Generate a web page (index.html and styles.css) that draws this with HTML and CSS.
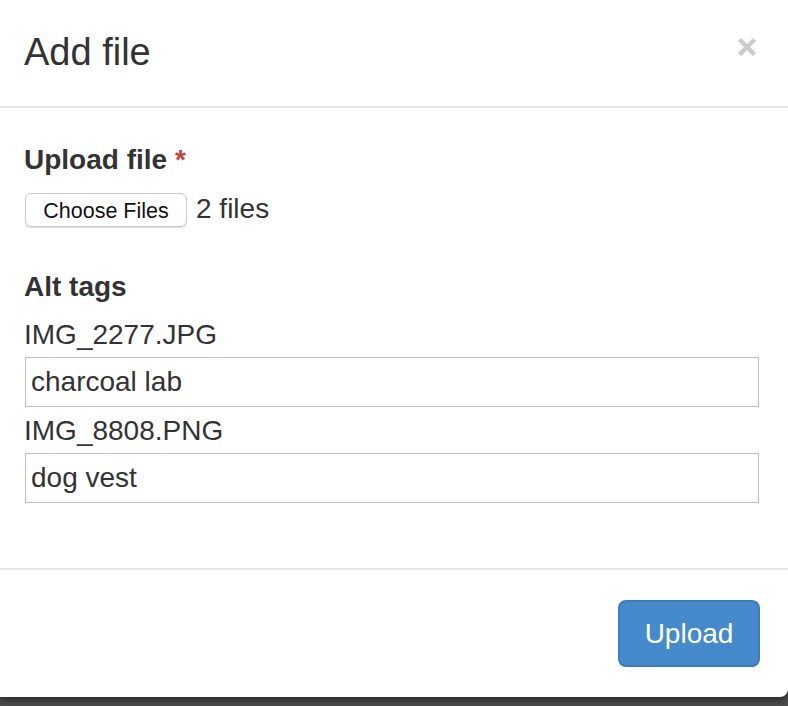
FILE: index.html
```html
<!DOCTYPE html>
<html lang="en">
<head>
<meta charset="utf-8">
<title>Add file</title>
<link rel="stylesheet" href="styles.css">
</head>
<body>
<div class="modal">
  <div class="modal-header">
    <h4 class="modal-title">Add file</h4>
    <button class="close" type="button" aria-label="Close">
      <svg width="20" height="20" viewBox="0 0 20 20"><path d="M2.5 2.5 L17.5 17.5 M17.5 2.5 L2.5 17.5" stroke="#cbcbcb" stroke-width="4.4" fill="none"/></svg>
    </button>
  </div>
  <div class="modal-body">
    <div class="group-upload">
      <div class="label">Upload file <span class="req">*</span></div>
      <div class="file-row">
        <span class="choose">Choose Files</span>
        <span class="file-count">2 files</span>
      </div>
    </div>
    <div class="group-alt">
      <div class="label label-alt">Alt tags</div>
      <div class="alt-item">
        <div class="file-name">IMG_2277.JPG</div>
        <input class="alt-input" type="text" value="charcoal lab">
      </div>
      <div class="alt-item">
        <div class="file-name">IMG_8808.PNG</div>
        <input class="alt-input" type="text" value="dog vest">
      </div>
    </div>
  </div>
  <div class="modal-footer">
    <button class="btn-primary" type="button">Upload</button>
  </div>
</div>
</body>
</html>
```
FILE: styles.css
```css
* { box-sizing: border-box; }
html, body { margin: 0; padding: 0; }
body {
  background: #4e4e4e;
  font-family: "Liberation Sans", Arial, sans-serif;
  color: #333;
  width: 788px;
  height: 706px;
  overflow: hidden;
}
.modal {
  width: 788px;
  height: 697px;
  background: #fff;
  border-bottom-right-radius: 8px;
  box-shadow: 0 3px 8px rgba(0,0,0,0.5);
  display: flex;
  flex-direction: column;
}
.modal-header {
  flex: none;
  height: 108px;
  padding: 26px 30px 28px 24px;
  border-bottom: 2px solid #e5e5e5;
  display: flex;
  justify-content: space-between;
  align-items: flex-start;
}
.modal-title {
  margin: 0;
  font-size: 38px;
  line-height: 52px;
  font-weight: normal;
  color: #333;
}
.close {
  border: 0;
  background: none;
  padding: 0;
  margin-top: 11px;
  margin-right: 1px;
  width: 20px;
  height: 20px;
  display: block;
}
.close svg { display: block; }
.modal-body {
  flex: none;
  padding: 32px 27px 0 24px;
  height: 462px;
  border-bottom: 2px solid #e5e5e5;
}
.label {
  font-size: 28px;
  line-height: 40px;
  font-weight: bold;
  color: #333;
}
.req { color: #c9433d; }
.file-row {
  margin-top: 10px;
  height: 40px;
  display: flex;
  align-items: baseline;
  padding-top: 3px;
}
.choose {
  display: inline-block;
  height: 34px;
  line-height: 34px;
  width: 162px;
  margin-left: 1px;
  text-align: center;
  font-size: 21.5px;
  color: #111;
  background: #fff;
  border: 1px solid #c9c9c9;
  border-radius: 6px;
  box-shadow: 0 1px 1px rgba(0,0,0,0.12);
}
.file-count {
  font-size: 28px;
  margin-left: 9px;
  color: #333;
}
.group-alt { margin-top: 37px; }
.label-alt { margin-bottom: 8px; }
.file-name {
  font-size: 28px;
  line-height: 40px;
  color: #333;
}
.alt-item + .alt-item { margin-top: 4px; }
.alt-input {
  display: block;
  margin: 2px 0 0 1px;
  width: 734px;
  height: 50px;
  border: 1.5px solid #c2c2c2;
  border-radius: 0;
  padding: 0 5px;
  font-family: "Liberation Sans", Arial, sans-serif;
  font-size: 28px;
  color: #333;
  background: #fff;
  outline: none;
}
.modal-footer {
  flex: none;
  padding: 30px 28px 30px 24px;
  display: flex;
  justify-content: flex-end;
}
.btn-primary {
  width: 142px;
  height: 67px;
  background: #458acb;
  border: 2px solid #3c7cb9;
  border-radius: 8px;
  color: #fff;
  font-family: "Liberation Sans", Arial, sans-serif;
  font-size: 28px;
  padding: 0;
}
```
